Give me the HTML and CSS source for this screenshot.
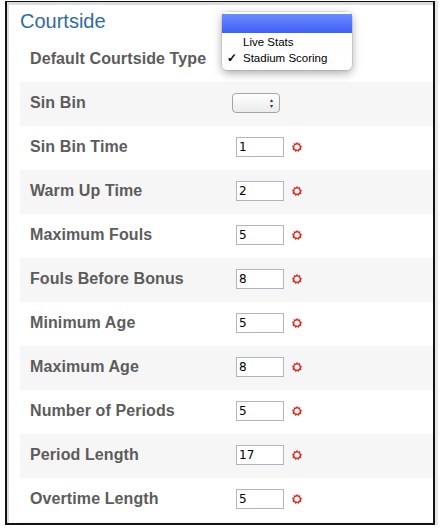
FILE: index.html
```html
<!DOCTYPE html>
<html>
<head>
<meta charset="utf-8">
<link rel="stylesheet" href="styles.css">
</head>
<body>
<div class="frame">
  <div class="inner">
    <div class="panel">
      <h2 class="title">Courtside</h2>
      <div class="row">
        <span class="label">Default Courtside Type</span>
        <span class="select wide"></span>
      </div>
      <div class="row alt">
        <span class="label">Sin Bin</span>
        <span class="select"><span class="arrows">&#9652;<br>&#9662;</span></span>
      </div>
      <div class="row">
        <span class="label">Sin Bin Time</span>
        <span class="input">1</span><svg class="req" viewBox="0 0 10 10"><use href="#star"/></svg>
      </div>
      <div class="row alt">
        <span class="label">Warm Up Time</span>
        <span class="input">2</span><svg class="req" viewBox="0 0 10 10"><use href="#star"/></svg>
      </div>
      <div class="row">
        <span class="label">Maximum Fouls</span>
        <span class="input">5</span><svg class="req" viewBox="0 0 10 10"><use href="#star"/></svg>
      </div>
      <div class="row alt">
        <span class="label">Fouls Before Bonus</span>
        <span class="input">8</span><svg class="req" viewBox="0 0 10 10"><use href="#star"/></svg>
      </div>
      <div class="row">
        <span class="label">Minimum Age</span>
        <span class="input">5</span><svg class="req" viewBox="0 0 10 10"><use href="#star"/></svg>
      </div>
      <div class="row alt">
        <span class="label">Maximum Age</span>
        <span class="input">8</span><svg class="req" viewBox="0 0 10 10"><use href="#star"/></svg>
      </div>
      <div class="row">
        <span class="label">Number of Periods</span>
        <span class="input">5</span><svg class="req" viewBox="0 0 10 10"><use href="#star"/></svg>
      </div>
      <div class="row alt">
        <span class="label">Period Length</span>
        <span class="input">17</span><svg class="req" viewBox="0 0 10 10"><use href="#star"/></svg>
      </div>
      <div class="row">
        <span class="label">Overtime Length</span>
        <span class="input">5</span><svg class="req" viewBox="0 0 10 10"><use href="#star"/></svg>
      </div>
      <div class="row alt"></div>
    </div>
  </div>
  <div class="menu">
    <div class="item hl"></div>
    <div class="item">Live Stats</div>
    <div class="item"><span class="check">&#10003;</span>Stadium Scoring</div>
  </div>
</div>
<svg class="defs" width="0" height="0">
  <defs>
    <g id="star">
      <polygon fill="#e8231a" points="5,0 6.2,1.6 8.2,1.2 8.2,3.2 10,4.3 8.9,6 9.5,8 7.5,8.2 6.4,10 5,8.7 3.6,10 2.5,8.2 0.5,8 1.1,6 0,4.3 1.8,3.2 1.8,1.2 3.8,1.6"/>
      <circle cx="5" cy="5" r="2.6" fill="#fff"/>
    </g>
  </defs>
</svg>
</body>
</html>
```
FILE: styles.css
```css
html, body {
  margin: 0;
  padding: 0;
  background: #fff;
}
body {
  width: 441px;
  height: 530px;
  overflow: hidden;
  font-family: "Liberation Sans", Arial, sans-serif;
}
.defs {
  position: absolute;
}
.frame {
  position: relative;
  margin: 1px 0 0 5px;
  width: 426px;
  height: 521px;
  border: 2px solid #111;
  border-top-width: 1px;
  box-shadow: 3px 0 0 #e6e6e6;
}
.inner {
  height: 100%;
  overflow: hidden;
  border-left: 2px solid #dedede;
  border-top: 3px solid #dcdcdc;
  box-sizing: border-box;
}
.panel {
  padding-left: 11px;
}
.title {
  margin: 0;
  height: 33px;
  line-height: 32px;
  font-size: 20px;
  font-weight: normal;
  color: #2f6aa3;
}
.row {
  height: 44px;
  box-sizing: border-box;
  display: flex;
  align-items: center;
  padding: 0 0 3px 10px;
}
.row.alt {
  background: #f6f6f6;
}
.label {
  width: 202px;
  font-size: 16px;
  font-weight: bold;
  letter-spacing: 0.1px;
  color: #5c5c5c;
}
.select {
  position: relative;
  width: 46px;
  height: 18px;
  border: 1px solid #a4a4a4;
  border-radius: 4px;
  background: linear-gradient(#ffffff, #ebebeb);
}
.select.wide {
  width: 118px;
}
.arrows {
  position: absolute;
  right: 6px;
  top: 3px;
  font-size: 6px;
  line-height: 6px;
  color: #333;
}
.input {
  margin-left: 4px;
  width: 44px;
  height: 18px;
  border: 1px solid #b4b4c0;
  background: #fff;
  font-family: "DejaVu Sans", sans-serif;
  font-size: 12px;
  line-height: 18px;
  padding-left: 2px;
  color: #000;
}
.req {
  margin-left: 8px;
  width: 10px;
  height: 10px;
}
.menu {
  position: absolute;
  left: 215px;
  top: 10px;
  width: 130px;
  padding: 2px 0 4px;
  background: rgba(255, 255, 255, 0.97);
  border-radius: 5px;
  box-shadow: 0 3px 10px rgba(0, 0, 0, 0.35), 0 0 0 0.5px rgba(0, 0, 0, 0.15);
  box-sizing: border-box;
  font-family: "Liberation Sans", Arial, sans-serif;
  font-size: 11.5px;
  color: #000;
}
.item {
  height: 16px;
  line-height: 16px;
  padding-left: 21px;
  position: relative;
}
.item.hl {
  height: 19px;
  margin-bottom: 1px;
  background: linear-gradient(#6b8bff, #3f5ff7);
}
.check {
  position: absolute;
  left: 5px;
  font-size: 12px;
  font-weight: bold;
}
```
